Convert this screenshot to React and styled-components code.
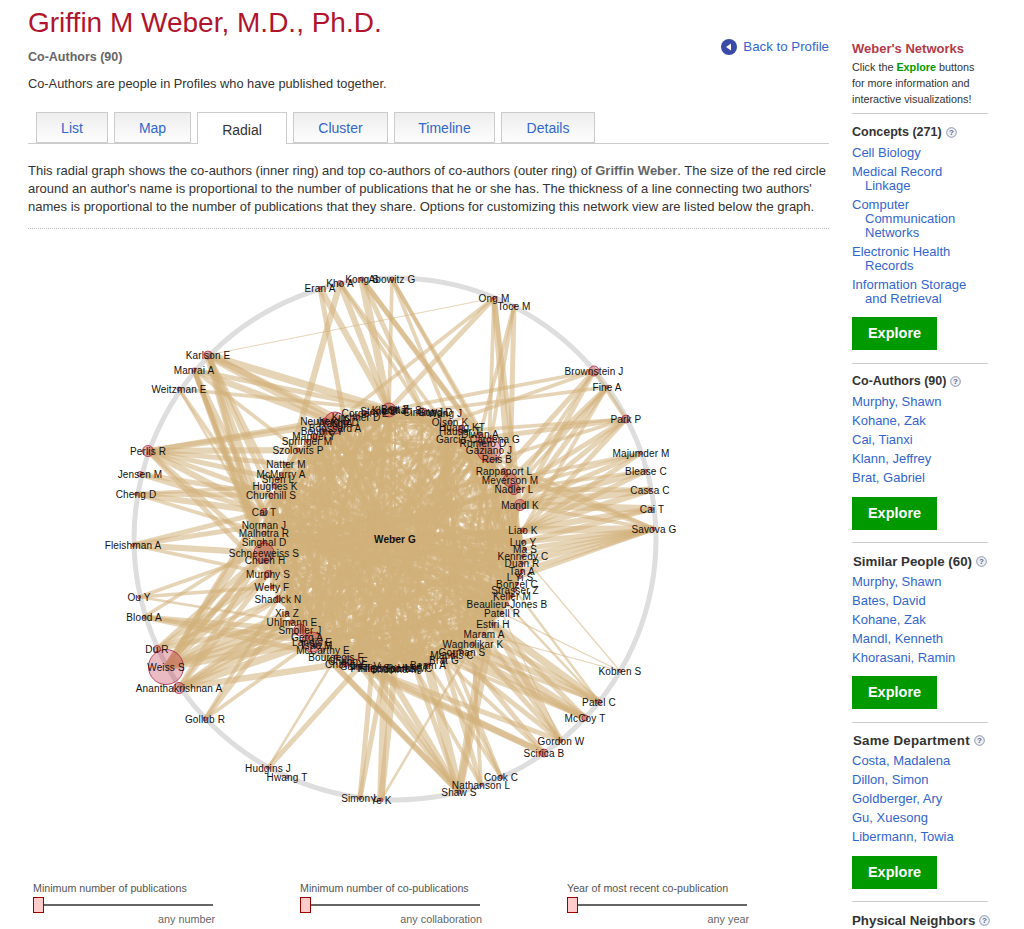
import React from 'react'
import styled, { createGlobalStyle } from 'styled-components'

const Global = createGlobalStyle`
    html, body { margin: 0; padding: 0; background: #fff; height: 929px; overflow: hidden; }
    body { font-family: "Liberation Sans", Arial, sans-serif; color: #333; }
`
const Page = styled.div`
    display: flex;
    width: 1024px;
    height: 929px;
    overflow: hidden;
`
const Main = styled.div`
    width: 801px;
    margin-left: 28px;
    flex: none;
`
const Title = styled.h1`
    margin: 0;
    padding-top: 6px;
    font-size: 28px;
    line-height: 34px;
    font-weight: normal;
    color: #b0152d;
`
const SubRow = styled.div`
    display: flex;
    justify-content: space-between;
    align-items: flex-start;
`
const SubTitle = styled.h2`
    margin: 10px 0 0;
    font-size: 12.5px;
    line-height: 15px;
    font-weight: bold;
    color: #666;
`
const BackLink = styled.a`
    display: flex;
    align-items: center;
    gap: 6px;
    margin-top: -1px;
    font-size: 13.3px;
    line-height: 16px;
    color: #3366cc;
`
const Intro = styled.p`
    margin: 11px 0 0;
    font-size: 12.8px;
    line-height: 15px;
    color: #333;
`
const Tabs = styled.div`
    display: flex;
    gap: 6px;
    height: 31px;
    margin-top: 21px;
    padding-left: 8px;
    border-bottom: 1px solid #ccc;
`
const Tab = styled.div`
    box-sizing: border-box;
    width: ${p => p.$w}px;
    height: ${p => (p.$active ? 32 : 31)}px;
    border: 1px solid #ccc;
    border-bottom: ${p => (p.$active ? 'none' : '1px solid #ccc')};
    background: ${p => (p.$active ? '#fff' : 'linear-gradient(#eee, #fdfdfd)')};
    color: ${p => (p.$active ? '#333' : '#3366cc')};
    font-size: 14px;
    line-height: ${p => (p.$active ? 34 : 31)}px;
    text-align: center;
`
const Description = styled.p`
    margin: 17.5px 0 0;
    padding-bottom: 12.5px;
    font-size: 13px;
    line-height: 18px;
    color: #333;
    border-bottom: 1px dotted #bbb;
    b { color: #666; }
`
const Graph = styled.svg`
    display: block;
    width: 801px;
    height: 640px;
`
const Ring = styled.circle`
    fill: none;
    stroke: #dedede;
    stroke-width: 5;
`
const Edge = styled.line`
    stroke: #d2b07a;
    stroke-opacity: 0.55;
`
const Node = styled.circle`
    fill: rgba(190, 30, 60, 0.3);
    stroke: rgba(170, 25, 55, 0.75);
    stroke-width: 1;
`
const Label = styled.text`
    font-family: "Liberation Sans", Arial, sans-serif;
    font-size: 10px;
    font-weight: ${p => (p.$bold ? 'bold' : 'normal')};
    fill: #111;
    text-anchor: middle;
    dominant-baseline: central;
    letter-spacing: 0.15px;
`
const Sliders = styled.div`
    display: flex;
    gap: 87px;
    margin-top: 13px;
    padding-left: 5px;
`
const Slider = styled.div`
    width: 180px;
    font-size: 10.7px;
    line-height: 13px;
    color: #555;
`
const Track = styled.div`
    position: relative;
    height: 2px;
    margin: 9px 0 7px;
    background: #666;
`
const Handle = styled.div`
    position: absolute;
    box-sizing: border-box;
    left: 0;
    top: -7px;
    width: 11px;
    height: 16px;
    background: #fcc;
    border: 1px solid #900;
`
const SliderEnd = styled.div`
    text-align: right;
    margin-right: -2px;
    font-size: 10.8px;
    color: #666;
`
const Side = styled.div`
    width: 136px;
    margin-left: 23px;
    flex: none;
    padding-top: 41px;
`
const SideTitle = styled.div`
    font-size: 13px;
    line-height: 15px;
    font-weight: bold;
    color: #b23a48;
`
const SideNote = styled.div`
    margin-top: 3px;
    padding-bottom: 6px;
    font-size: 10.8px;
    line-height: 16px;
    color: #333;
    b { color: #009900; }
`
const Section = styled.section`
    border-top: 1px solid #ccc;
    padding: 10.5px 0 12.5px;
`
const Heading = styled.div`
    display: flex;
    align-items: center;
    gap: 4px;
    padding-left: ${p => p.$indent || 0}px;
    font-size: ${p => p.$size || 12.5}px;
    letter-spacing: ${p => p.$spacing || 0}px;
    line-height: 15px;
    font-weight: bold;
    white-space: nowrap;
    color: #333;
    svg { flex: none; }
`
const Links = styled.div`
    display: flex;
    flex-direction: column;
    gap: 5px;
    margin-top: 6px;
    margin-bottom: -0.5px;
`
const SideLink = styled.a`
    display: block;
    padding-left: 13px;
    text-indent: -13px;
    font-size: 13px;
    line-height: 14px;
    color: #3366cc;
`
const Explore = styled.div`
    width: 85px;
    height: 33px;
    margin-top: 12px;
    background: #009900;
    color: #fff;
    font-size: 14.5px;
    font-weight: bold;
    text-align: center;
    line-height: 33px;
`

const Help = () => (
    <svg width="11" height="11" viewBox="0 0 11 11">
        <circle cx="5.5" cy="5.5" r="4.8" fill="#eef1f6" stroke="#8a94a8" />
        <text x="5.5" y="8.4" textAnchor="middle" fontSize="8" fontFamily="Liberation Sans" fill="#5a6a8a">?</text>
    </svg>
)

// page coordinates of every author: name, x, y, circle radius
const outer = [
    ['Eran A', 320, 288, 1.5], ['Kho A', 340, 283, 2.5], ['Kong S', 362, 279, 2], ['Abowitz G', 392, 279, 2],
    ['Ong M', 494, 298, 1.5], ['Toce M', 514, 306, 1.5], ['Brownstein J', 594, 371, 5], ['Fine A', 607, 387, 1.5],
    ['Park P', 626, 419, 4], ['Majumder M', 641, 453, 1.5], ['Blease C', 646, 471, 1.5], ['Cassa C', 650, 490, 1.5],
    ['Cai T', 652, 509, 1.5], ['Savova G', 654, 529, 1.5], ['Kobren S', 620, 671, 1.5], ['Patel C', 599, 702, 2.5],
    ['McCoy T', 585, 718, 3], ['Gordon W', 561, 741, 1.5], ['Scirica B', 544, 753, 4], ['Cook C', 501, 777, 2],
    ['Nathanson L', 481, 785, 1.5], ['Shaw S', 459, 792, 2], ['Ye K', 381, 800, 2], ['Simon L', 360, 798, 1.5],
    ['Hwang T', 287, 777, 1.5], ['Hudgins J', 268, 768, 1.5], ['Gollub R', 205, 719, 2], ['Ananthakrishnan A', 179, 688, 5.5],
    ['Weiss S', 166, 667, 17.5], ['Du R', 157, 649, 3.5], ['Blood A', 144, 617, 1.5], ['Ou Y', 139, 597, 1.5],
    ['Fleishman A', 133, 545, 1.5], ['Cheng D', 136, 494, 1.5], ['Jensen M', 140, 474, 2.5], ['Perlis R', 148, 451, 5.5],
    ['Weitzman E', 179, 389, 2], ['Manrai A', 194, 370, 2], ['Karlson E', 208, 355, 4],
]
const inner = [
    ['Natter M', 286, 464, 1.5], ['McMurry A', 281, 474, 1.5], ['Shen L', 278, 479, 1.5], ['Hughes K', 275, 486, 2.5],
    ['Churchill S', 271, 495, 2], ['Cai T', 264, 512, 3.5], ['Norman J', 264, 525, 1.5], ['Malhotra R', 264, 533, 2],
    ['Singhal D', 264, 542, 1.5], ['Schneeweiss S', 264, 553, 10], ['Chueh H', 265, 560, 1.5], ['Murphy S', 268, 574, 3.5],
    ['Welty F', 272, 587, 1.5], ['Shadick N', 278, 599, 3], ['Xia Z', 287, 613, 1.5], ['Uhlmann E', 292, 622, 2],
    ['Smoller J', 300, 630, 6], ['Gerg A', 307, 637, 2], ['Landis E', 312, 642, 10], ['Tsao M', 316, 645, 2],
    ['McCarthy E', 323, 650, 2], ['Bourgeois F', 336, 657, 2], ['Cheng E', 348, 661, 5], ['Chang Y', 345, 664, 2],
    ['Gainer V', 360, 666, 2], ['Phillips R', 372, 668, 2], ['Friedman N', 385, 668, 2], ['Shubina M', 395, 669, 2],
    ['Sparks M', 405, 668, 2], ['Hong C', 415, 668, 2], ['Beam A', 428, 665, 2], ['Brat G', 444, 660, 2.5],
    ['Mandis C', 452, 655, 1.5], ['Gorman S', 462, 652, 1.5], ['Wagholikar K', 473, 644, 2], ['Maram A', 484, 634, 1.5],
    ['Estiri H', 493, 624, 1.5], ['Patell R', 502, 613, 1.5], ['Beaulieu-Jones B', 507, 604, 1.5], ['Keller M', 512, 596, 1.5],
    ['Strasser Z', 515, 590, 1.5], ['Bonzel C', 517, 584, 1.5], ['L Yi S', 520, 577, 1.5], ['Tan A', 522, 571, 1.5],
    ['Duan R', 522, 563, 1.5], ['Kennedy C', 523, 556, 1.5], ['Ma S', 525, 549, 1.5], ['Luo Y', 523, 542, 1.5],
    ['Liao K', 523, 530, 2], ['Mandl K', 520, 505, 5.5], ['Nadler L', 514, 489, 5.5], ['Meyerson M', 510, 480, 6.5],
    ['Rappaport L', 504, 471, 2.5], ['Reis B', 497, 459, 1.5], ['Gaziano J', 489, 450, 12], ['Romero D', 483, 443, 2],
    ['Garcia-Cardena G', 478, 439, 2], ['Diwan A', 480, 434, 2], ['Hauser T', 460, 431, 2], ['Huang KT', 462, 427, 2],
    ['Olson K', 450, 422, 2], ['Wang J', 445, 413, 1.5], ['Gong D', 435, 412, 2], ['Cimino J', 423, 412, 4],
    ['Shah S', 405, 410, 2], ['Brat Z', 395, 409, 2], ['Klann J', 389, 410, 7], ['Stone L', 378, 411, 2],
    ['Cordero E', 365, 413, 2.5], ['Kirchner D', 356, 417, 3], ['Kim D', 345, 422, 2], ['Wang A', 335, 423, 11],
    ['Neuberg D', 325, 421, 3], ['Boussard A', 335, 428, 2], ['Bourne Y', 322, 431, 3], ['Manuel Y', 314, 436, 3],
    ['Springer M', 307, 441, 1.5], ['Szolovits P', 298, 450, 2],
]
const center = ['Weber G', 395, 539, 1.5]

const pos = {}
outer.forEach(n => { pos['o:' + n[0]] = n })
inner.forEach(n => { pos[n[0]] = n })

const links = {
    'Eran A': ['Klann J:5', 'Kim D:4'],
    'Kho A': ['Klann J:5', 'Gong D:3', 'Schneeweiss S:5', 'Cimino J:3'],
    'Kong S': ['Klann J:6', 'Reis B:4', 'Gaziano J:4', 'Cimino J:4'],
    'Abowitz G': ['Klann J:3', 'Gaziano J:3', 'Olson K:3', 'Rappaport L:3'],
    'Ong M': ['Klann J:4', 'Gaziano J:3', 'Mandl K:4', 'Meyerson M:5', 'Wang A:3'],
    'Toce M': ['Meyerson M:4', 'Gaziano J:3', 'Diwan A:3'],
    'Brownstein J': ['Mandl K:4', 'Rappaport L:4', 'Nadler L:3', 'Olson K:3', 'Klann J:3'],
    'Fine A': ['Mandl K:4', 'Meyerson M:4', 'Nadler L:3', 'Liao K:3', 'Wang A:3'],
    'Park P': ['Mandl K:4', 'Nadler L:4', 'Liao K:4', 'Garcia-Cardena G:4', 'Reis B:3', 'Hauser T:3'],
    'Majumder M': ['Liao K:4', 'Mandl K:4', 'Nadler L:3', 'Meyerson M:3'],
    'Blease C': ['Mandl K:5', 'Liao K:4', 'Nadler L:3'],
    'Cassa C': ['Mandl K:6', 'Liao K:5', 'Nadler L:4'],
    'Cai T': ['Mandl K:6', 'Liao K:5', 'Luo Y:4'],
    'Savova G': ['Liao K:6', 'Luo Y:4', 'Ma S:4', 'Kennedy C:4', 'Duan R:4', 'Tan A:4', 'L Yi S:3', 'Rappaport L:4', 'Reis B:3', 'Mandl K:3'],
    'Kobren S': ['Kennedy C:1', 'Maram A:1', 'Patell R:1'],
    'Patel C': ['Estiri H:6', 'Maram A:4', 'Wagholikar K:5', 'Beaulieu-Jones B:2', 'Strasser Z:2', 'Gorman S:3'],
    'McCoy T': ['Estiri H:4', 'Gorman S:5', 'Wagholikar K:6', 'Mandis C:4', 'Brat G:3'],
    'Gordon W': ['Estiri H:5', 'Maram A:3', 'Wagholikar K:4', 'Patell R:1', 'Mandis C:4', 'Bourgeois F:4'],
    'Scirica B': ['Gorman S:4', 'Bourgeois F:5', 'Landis E:5', 'Brat G:3'],
    'Cook C': ['Brat G:3', 'Beam A:3', 'Mandis C:3'],
    'Nathanson L': ['Hong C:3', 'Brat G:4', 'Wagholikar K:3'],
    'Shaw S': ['Phillips R:4', 'Friedman N:5', 'Hong C:4', 'Beam A:7', 'Maram A:6', 'Estiri H:6', 'Gainer V:4', 'Landis E:4', 'Smoller J:5'],
    'Ye K': ['Friedman N:6', 'Wagholikar K:2', 'Shubina M:5'],
    'Simon L': ['Friedman N:4', 'Phillips R:4'],
    'Hudgins J': ['Gainer V:4', 'Bourgeois F:2'],
    'Gollub R': ['Xia Z:4', 'Landis E:3', 'Shadick N:3'],
    'Ananthakrishnan A': ['Landis E:6', 'Smoller J:5', 'Uhlmann E:5', 'Xia Z:4', 'Wagholikar K:5', 'Murphy S:4', 'Schneeweiss S:4'],
    'Weiss S': ['Smoller J:6', 'Uhlmann E:5', 'Schneeweiss S:5', 'Murphy S:5', 'Landis E:6', 'Xia Z:5', 'Cai T:4', 'Shadick N:4', 'Klann J:4', 'Wang A:4', 'Churchill S:4'],
    'Du R': ['Schneeweiss S:4', 'Murphy S:4', 'Uhlmann E:4', 'Shadick N:3'],
    'Blood A': ['Landis E:4', 'Smoller J:4', 'Bourgeois F:4', 'Singhal D:3'],
    'Ou Y': ['Schneeweiss S:3', 'Welty F:3', 'Uhlmann E:2'],
    'Fleishman A': ['Cai T:4', 'Schneeweiss S:5', 'Norman J:4', 'Murphy S:3'],
    'Cheng D': ['Cai T:5', 'Hughes K:3', 'Malhotra R:3', 'Churchill S:4'],
    'Jensen M': ['Cai T:4', 'Churchill S:4'],
    'Perlis R': ['Szolovits P:5', 'Wang A:5', 'Klann J:4', 'Cai T:5', 'Churchill S:4', 'Schneeweiss S:4', 'Shen L:4', 'Murphy S:4', 'Natter M:4'],
    'Weitzman E': ['Klann J:3', 'Cai T:3', 'Malhotra R:2'],
    'Manrai A': ['Klann J:4', 'Cai T:4', 'Schneeweiss S:4', 'Murphy S:4', 'Szolovits P:3', 'Wang A:5', 'Singhal D:3', 'Chueh H:3'],
    'Karlson E': ['Klann J:6', 'Wang A:7', 'Kim D:5', 'Cai T:4', 'Churchill S:4', 'Hughes K:4', 'Schneeweiss S:6', 'Murphy S:3'],
}

const edges = []
Object.keys(links).forEach(name => {
    links[name].forEach(item => {
        const [target, w] = item.split(':')
        edges.push([pos['o:' + name], pos[target], +w * 1.25])
    })
})
edges.push([pos['o:Karlson E'], pos['o:Ong M'], 1])
edges.push([pos['o:Brownstein J'], pos['o:Park P'], 4])

// inner ring is a dense mesh, seeded so the picture stays the same
let seed = 271
const rand = () => {
    seed = (seed + 0x6d2b79f5) | 0
    let t = Math.imul(seed ^ (seed >>> 15), 1 | seed)
    t = (t + Math.imul(t ^ (t >>> 7), 61 | t)) ^ t
    return ((t ^ (t >>> 14)) >>> 0) / 4294967296
}
inner.forEach(n => edges.push([n, center, 2 + Math.floor(rand() * 4)]))
for (let i = 0; i < 800; i++) {
    const a = inner[Math.floor(rand() * inner.length)]
    const b = inner[Math.floor(rand() * inner.length)]
    if (a === b) continue
    const dist = Math.hypot(a[1] - b[1], a[2] - b[2])
    if (dist < 70) continue
    // upper half of the ring is thinner than the lower half
    if ((a[2] + b[2]) / 2 < 505 && rand() < 0.5) continue
    edges.push([a, b, 1 + Math.floor(rand() * 4)])
}

const NetworkGraph = () => (
    <Graph viewBox="28 229 801 640">
        <Ring cx="395" cy="539" r="261" />
        {edges.map((e, i) => (
            <Edge key={i} x1={e[0][1]} y1={e[0][2]} x2={e[1][1]} y2={e[1][2]} strokeWidth={e[2]} />
        ))}
        {[...outer, ...inner, center].map((n, i) => (
            <Node key={i} cx={n[1]} cy={n[2]} r={n[3]} />
        ))}
        {[...outer, ...inner].map((n, i) => (
            <Label key={i} x={n[1]} y={n[2]}>{n[0]}</Label>
        ))}
        <Label $bold x={center[1]} y={center[2]}>{center[0]}</Label>
    </Graph>
)

const tabs = [['List', 72], ['Map', 77], ['Radial', 90, true], ['Cluster', 95], ['Timeline', 101], ['Details', 94]]

const sliders = [
    ['Minimum number of publications', 'any number'],
    ['Minimum number of co-publications', 'any collaboration'],
    ['Year of most recent co-publication', 'any year'],
]

const sections = [
    { title: 'Co-Authors (90)', items: ['Murphy, Shawn', 'Kohane, Zak', 'Cai, Tianxi', 'Klann, Jeffrey', 'Brat, Gabriel'] },
    { title: 'Similar People (60)', indent: 1, size: 13.3, items: ['Murphy, Shawn', 'Bates, David', 'Kohane, Zak', 'Mandl, Kenneth', 'Khorasani, Ramin'] },
    { title: 'Same Department', indent: 1, size: 13.3, spacing: 0.25, items: ['Costa, Madalena', 'Dillon, Simon', 'Goldberger, Ary', 'Gu, Xuesong', 'Libermann, Towia'] },
]

export default function App() {
    return (
        <Page>
            <Global />
            <Main>
                <Title>Griffin M Weber, M.D., Ph.D.</Title>
                <SubRow>
                    <SubTitle>Co-Authors (90)</SubTitle>
                    <BackLink>
                        <svg width="16" height="16" viewBox="0 0 16 16">
                            <circle cx="8" cy="8" r="8" fill="#3a4aa8" />
                            <path d="M10 4.5v7L5 8z" fill="#fff" />
                        </svg>
                        Back to Profile
                    </BackLink>
                </SubRow>
                <Intro>Co-Authors are people in Profiles who have published together.</Intro>
                <Tabs>
                    {tabs.map(t => <Tab key={t[0]} $w={t[1]} $active={t[2]}>{t[0]}</Tab>)}
                </Tabs>
                <Description>
                    This radial graph shows the co-authors (inner ring) and top co-authors of co-authors (outer ring) of <b>Griffin Weber</b>. The size of the red circle around an author's name is proportional to the number of publications that he or she has. The thickness of a line connecting two authors' names is proportional to the number of publications that they share. Options for customizing this network view are listed below the graph.
                </Description>
                <NetworkGraph />
                <Sliders>
                    {sliders.map(s => (
                        <Slider key={s[0]}>
                            {s[0]}
                            <Track><Handle /></Track>
                            <SliderEnd>{s[1]}</SliderEnd>
                        </Slider>
                    ))}
                </Sliders>
            </Main>
            <Side>
                <SideTitle>Weber's Networks</SideTitle>
                <SideNote>Click the <b>Explore</b> buttons<br />for more information and<br />interactive visualizations!</SideNote>
                <Section>
                    <Heading>Concepts (271) <Help /></Heading>
                    <Links>
                        <SideLink>Cell Biology</SideLink>
                        <SideLink>Medical Record Linkage</SideLink>
                        <SideLink>Computer Communication Networks</SideLink>
                        <SideLink>Electronic Health Records</SideLink>
                        <SideLink>Information Storage and Retrieval</SideLink>
                    </Links>
                    <Explore>Explore</Explore>
                </Section>
                {sections.map(s => (
                    <Section key={s.title}>
                        <Heading $indent={s.indent} $size={s.size} $spacing={s.spacing}>{s.title} <Help /></Heading>
                        <Links>
                            {s.items.map(i => <SideLink key={i}>{i}</SideLink>)}
                        </Links>
                        <Explore>Explore</Explore>
                    </Section>
                ))}
                <Section>
                    <Heading $size={13.3}>Physical Neighbors <Help /></Heading>
                </Section>
            </Side>
        </Page>
    )
}
